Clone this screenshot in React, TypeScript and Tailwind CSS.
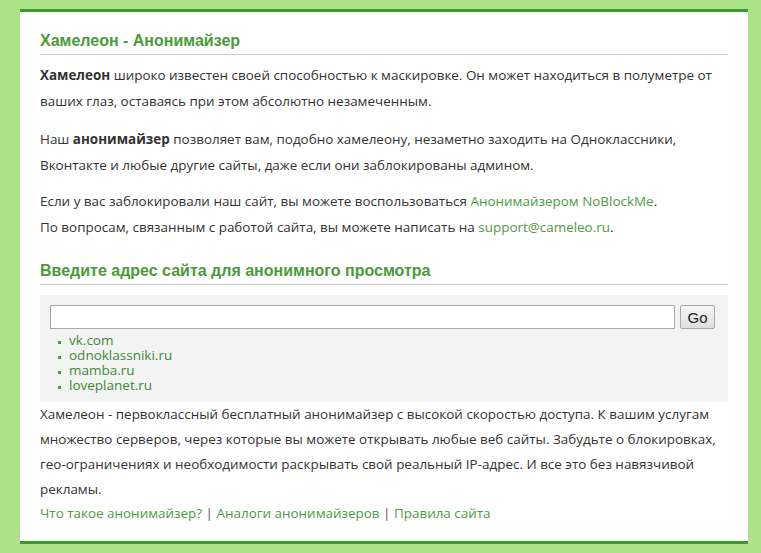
import React from 'react';

const sites = ['vk.com', 'odnoklassniki.ru', 'mamba.ru', 'loveplanet.ru'];

export default function App() {
  return (
    <div className="min-h-[553px] bg-[#ade388] pl-5 pr-[13px] pt-[9px] pb-[7px]">
      <div className="border-y-[3px] border-[#3a9a2c] bg-white px-5 pt-[19px] pb-[17px] text-[13.45px] leading-[26px] text-[#333] [font-family:'Open_Sans',sans-serif]">
        <h1 className="border-b border-[#cccccc] pb-[3px] text-[16px] leading-[20px] font-bold text-[#4a9b38] [font-family:'Liberation_Sans',Arial,sans-serif]">
          Хамелеон - Анонимайзер
        </h1>

        <p className="mt-[7px]">
          <b>Хамелеон</b> широко известен своей способностью к маскировке. Он может находиться в полуметре от
          ваших глаз, оставаясь при этом абсолютно незамеченным.
        </p>
        <p className="mt-3">
          Наш <b>анонимайзер</b> позволяет вам, подобно хамелеону, незаметно заходить на Одноклассники,
          Вконтакте и любые другие сайты, даже если они заблокированы админом.
        </p>
        <p className="mt-[10px]">
          Если у вас заблокировали наш сайт, вы можете воспользоваться{' '}
          <a href="#" className="text-[#4f9a45]">Анонимайзером NoBlockMe</a>.
          <br />
          По вопросам, связанным с работой сайта, вы можете написать на{' '}
          <a href="#" className="text-[#4f9a45]">support@cameleo.ru</a>.
        </p>

        <h2 className="mt-[21px] border-b border-[#cccccc] pb-[3px] text-[16px] leading-[20px] font-bold text-[#4a9b38] [font-family:'Liberation_Sans',Arial,sans-serif]">
          Введите адрес сайта для анонимного просмотра
        </h2>

        <div className="mt-[10px] bg-[#f3f3f3] pl-[10px] pr-[13px] pt-[10px] pb-[9px]">
          <div className="flex items-center gap-[5px]">
            <input
              type="text"
              className="h-[24px] flex-1 border border-[#a9a9a9] bg-white px-1 outline-none"
            />
            <button className="h-[24px] w-[35px] rounded-[2px] border border-[#a8a8a8] bg-gradient-to-b from-[#f8f8f8] to-[#dedede] text-[15px] leading-none text-[#222] [font-family:'Liberation_Sans',Arial,sans-serif]">
              Go
            </button>
          </div>
          <ul className="mt-[4px] pl-2 text-[13.5px] leading-[15px]">
            {sites.map(s => (
              <li key={s} className="flex items-center gap-[8px]">
                <span className="mt-[4px] h-[3px] w-[3px] bg-[#4f9a45]" />
                <a href="#" className="text-[#3d8a33]">{s}</a>
              </li>
            ))}
          </ul>
        </div>

        <p className="leading-[25px]">
          Хамелеон - первоклассный бесплатный анонимайзер с высокой скоростью доступа. К вашим услугам
          множество серверов, через которые вы можете открывать любые веб сайты. Забудьте о блокировках,
          гео-ограничениях и необходимости раскрывать свой реальный IP-адрес. И все это без навязчивой
          рекламы.
        </p>
        <p className="leading-[22px] text-[#555]">
          <a href="#" className="text-[#4f9a45]">Что такое анонимайзер?</a> |{' '}
          <a href="#" className="text-[#4f9a45]">Аналоги анонимайзеров</a> |{' '}
          <a href="#" className="text-[#4f9a45]">Правила сайта</a>
        </p>
      </div>
    </div>
  );
}
